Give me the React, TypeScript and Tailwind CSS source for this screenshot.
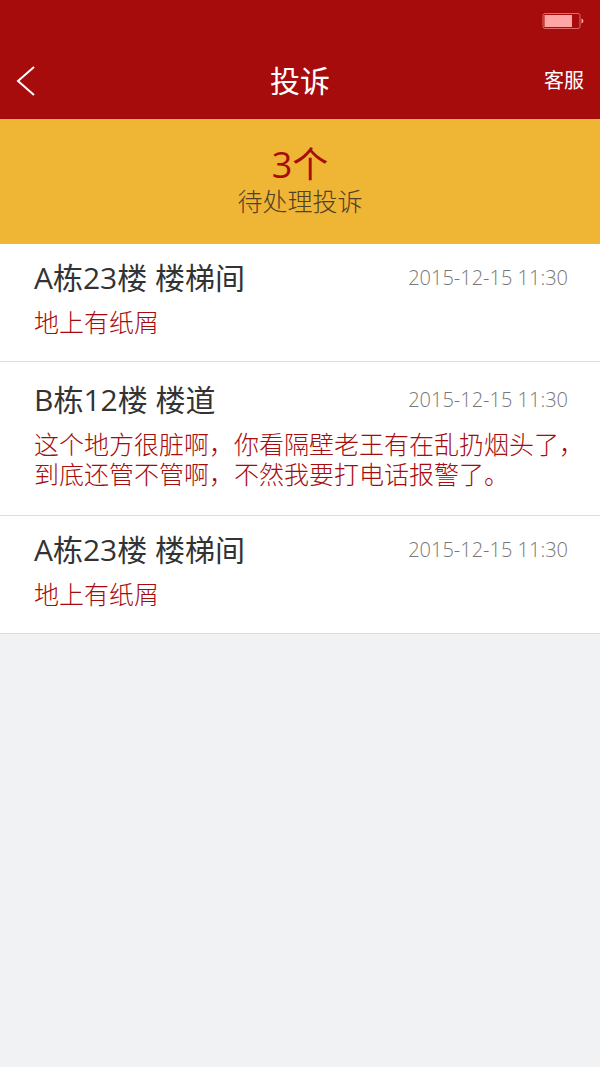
const complaints = [
  { id: 1, place: "A栋23楼 楼梯间", time: "2015-12-15 11:30", text: "地上有纸屑", padding: "pt-4 pb-6" },
  {
    id: 2,
    place: "B栋12楼 楼道",
    time: "2015-12-15 11:30",
    text: "这个地方很脏啊，你看隔壁老王有在乱扔烟头了，到底还管不管啊，不然我要打电话报警了。",
    padding: "pt-5 pb-[26px]",
  },
  { id: 3, place: "A栋23楼 楼梯间", time: "2015-12-15 11:30", text: "地上有纸屑", padding: "pt-4 pb-6" },
]

function Battery() {
  return (
    <svg width="42" height="18" viewBox="0 0 42 18" fill="none" aria-hidden="true">
      <rect x="1" y="1.5" width="37" height="15" rx="2" stroke="#e06a6a" />
      <rect x="2.5" y="3" width="27.5" height="12" fill="#ffa5a5" />
      <path d="M39.5 6.5c2.5 1 2.5 4 0 5z" fill="#ffa5a5" />
    </svg>
  )
}

function Header() {
  return (
    <header className="bg-[#a60c0c] text-white">
      <div className="flex h-[42px] items-center justify-end px-4">
        <Battery />
      </div>
      <div className="grid h-[77px] grid-cols-3 items-center px-4">
        <button aria-label="返回" className="justify-self-start">
          <svg width="19" height="30" viewBox="0 0 19 30" fill="none" stroke="currentColor" strokeWidth="2">
            <path d="M18 1L2 15l16 14" />
          </svg>
        </button>
        <h1 className="text-center text-[30px]">投诉</h1>
        <a href="#service" className="justify-self-end text-xl">
          客服
        </a>
      </div>
    </header>
  )
}

export default function App() {
  return (
    <div className="min-h-screen bg-[#f1f2f4] font-['Open_Sans','Noto_Sans_CJK_SC',sans-serif]">
      <Header />
      <section className="bg-[#efb535] pt-[26px] pb-[27px] text-center">
        <p className="text-4xl leading-10 text-[#a60c0c]">3个</p>
        <p className="text-[25px] leading-8 font-light text-[#514026]">待处理投诉</p>
      </section>
      <ul className="bg-white">
        {complaints.map((item) => (
          <li key={item.id} className={`border-b border-[#dddddd] pr-4 pl-[34px] ${item.padding}`}>
            <div className="flex items-center justify-between pr-4">
              <h2 className="text-[30px] leading-9 text-[#333333]">{item.place}</h2>
              <time className="text-xl font-light text-[#777777]">{item.time}</time>
            </div>
            <p className="mt-[11px] text-[25px] leading-[30px] font-light text-[#a60c0c]">{item.text}</p>
          </li>
        ))}
      </ul>
    </div>
  )
}
